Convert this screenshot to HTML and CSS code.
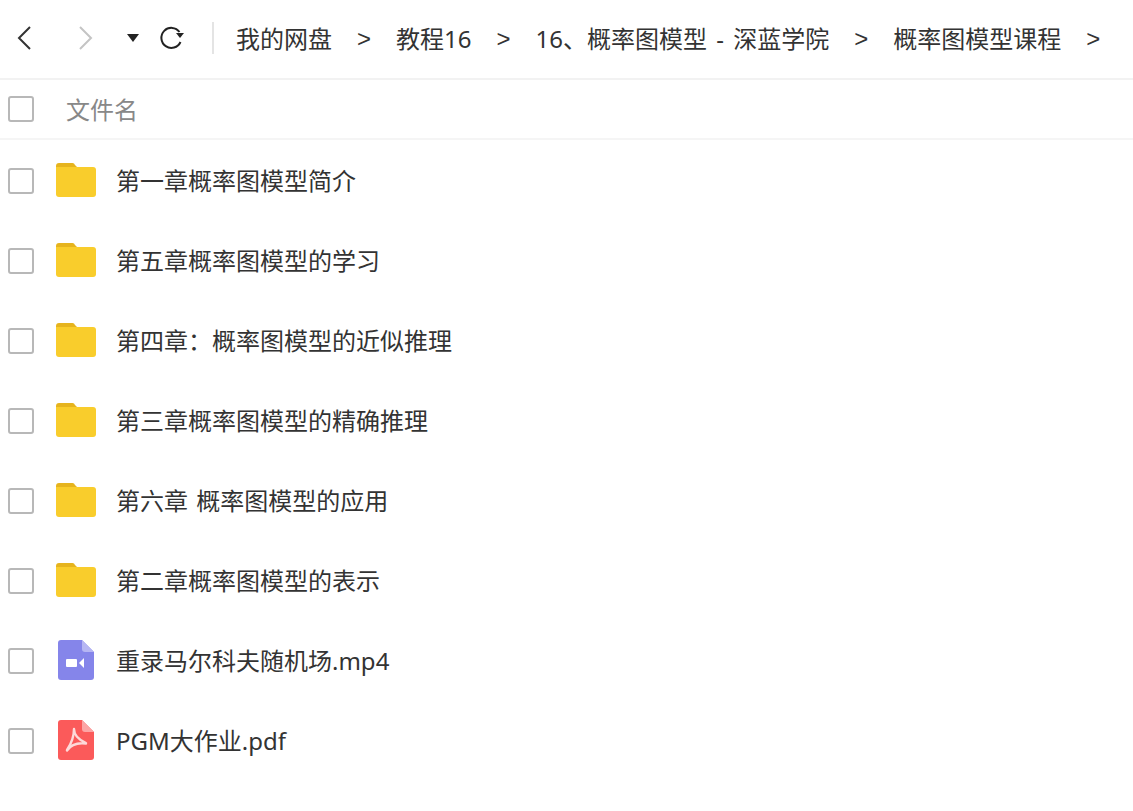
FILE: index.html
```html
<!DOCTYPE html>
<html lang="zh">
<head>
    <meta charset="UTF-8">
    <title>文件列表</title>
    <link rel="stylesheet" href="styles.css">
</head>
<body>
    <div class="toolbar">
        <svg class="nav-icon back" width="16" height="26" viewBox="0 0 16 26"><path d="M14 2 3 13l11 11" fill="none" stroke="#333" stroke-width="2"/></svg>
        <svg class="nav-icon forward" width="16" height="26" viewBox="0 0 16 26"><path d="M2 2l11 11L2 24" fill="none" stroke="#c4c4c4" stroke-width="2"/></svg>
        <svg class="nav-icon drop" width="12" height="8" viewBox="0 0 12 8"><path d="M0 0h12L6 8z" fill="#222"/></svg>
        <svg class="nav-icon reload" width="27" height="24" viewBox="0 0 27 24"><path d="M20.500 6A10 10 0 1 0 21.500 16" fill="none" stroke="#222" stroke-width="2"/><path d="M17 7h8l-4 5z" fill="#222"/></svg>
        <div class="divider"></div>
        <div class="crumbs">
            <span>我的网盘</span><span class="sep">&gt;</span>
            <span>教程16</span><span class="sep">&gt;</span>
            <span>16、概率图模型 - 深蓝学院</span><span class="sep">&gt;</span>
            <span>概率图模型课程</span><span class="sep">&gt;</span>
        </div>
    </div>

    <div class="list-head">
        <span class="check"></span>
        <span class="head-name">文件名</span>
    </div>

    <div class="row">
        <span class="check"></span>
        <svg class="file-icon" width="40" height="34" viewBox="0 0 40 34"><use href="#folder"/></svg>
        <span class="name">第一章概率图模型简介</span>
    </div>
    <div class="row">
        <span class="check"></span>
        <svg class="file-icon" width="40" height="34" viewBox="0 0 40 34"><use href="#folder"/></svg>
        <span class="name">第五章概率图模型的学习</span>
    </div>
    <div class="row">
        <span class="check"></span>
        <svg class="file-icon" width="40" height="34" viewBox="0 0 40 34"><use href="#folder"/></svg>
        <span class="name">第四章：概率图模型的近似推理</span>
    </div>
    <div class="row">
        <span class="check"></span>
        <svg class="file-icon" width="40" height="34" viewBox="0 0 40 34"><use href="#folder"/></svg>
        <span class="name">第三章概率图模型的精确推理</span>
    </div>
    <div class="row">
        <span class="check"></span>
        <svg class="file-icon" width="40" height="34" viewBox="0 0 40 34"><use href="#folder"/></svg>
        <span class="name">第六章 概率图模型的应用</span>
    </div>
    <div class="row">
        <span class="check"></span>
        <svg class="file-icon" width="40" height="34" viewBox="0 0 40 34"><use href="#folder"/></svg>
        <span class="name">第二章概率图模型的表示</span>
    </div>
    <div class="row">
        <span class="check"></span>
        <svg class="file-icon" width="40" height="40" viewBox="0 0 40 40">
            <path d="M5 0h21l12 12v25a3 3 0 0 1-3 3H5a3 3 0 0 1-3-3V3a3 3 0 0 1 3-3z" fill="#8585ea"/>
            <path d="M26 0l12 12h-9a3 3 0 0 1-3-3z" fill="#b6b6f3"/>
            <rect x="10" y="19" width="11" height="8" rx="1" fill="#fff"/>
            <path d="M23 23l5-5v10l-5-5z" fill="#fff"/>
        </svg>
        <span class="name">重录马尔科夫随机场.mp4</span>
    </div>
    <div class="row">
        <span class="check"></span>
        <svg class="file-icon" width="40" height="40" viewBox="0 0 40 40">
            <path d="M5 0h21l12 12v25a3 3 0 0 1-3 3H5a3 3 0 0 1-3-3V3a3 3 0 0 1 3-3z" fill="#fb5a5a"/>
            <path d="M26 0l12 12h-9a3 3 0 0 1-3-3z" fill="#fca5a5"/>
            <path d="M18 9c0 5 3 10 12 14M30 23.500c-8-1-15 1-19 7M18 9c0 7-3 15-7 21" fill="none" stroke="#fdd9d9" stroke-width="2.400" stroke-linecap="round"/>
        </svg>
        <span class="name">PGM大作业.pdf</span>
    </div>

    <svg class="defs" width="0" height="0">
        <symbol id="folder" viewBox="0 0 40 34">
            <path d="M0 4V3a3 3 0 0 1 3-3h13a3 3 0 0 1 3 2l2 2z" fill="#e6b41e"/>
            <path d="M0 4h37a3 3 0 0 1 3 3v24a3 3 0 0 1-3 3H3a3 3 0 0 1-3-3z" fill="#f9cd2c"/>
        </symbol>
    </svg>
</body>
</html>
```

FILE: styles.css
```css
* { box-sizing: border-box; }
body { margin: 0; background: #fff; color: #333; font-family: "Noto Sans", "Noto Sans CJK SC", sans-serif; font-size: 24px; overflow: hidden; }
.defs { display: block; }

.toolbar { display: flex; align-items: center; height: 80px; padding: 0 0 2px 16px; border-bottom: 2px solid #f2f2f2; }
.nav-icon { flex: none; }
.forward { margin-left: 46px; }
.drop { margin-left: 33px; }
.reload { margin-left: 20px; }
.divider { width: 2px; height: 32px; margin-left: 26px; background: #e4e4e4; }
.crumbs { display: flex; align-items: center; gap: 25px; margin-left: 22px; padding-bottom: 2px; white-space: nowrap; word-spacing: 3px; }
.sep { width: 14px; margin-top: 4px; font-family: "Liberation Sans", sans-serif; }

.list-head { display: flex; align-items: center; height: 60px; padding-left: 8px; border-bottom: 2px solid #f5f5f5; }
.head-name { margin-left: 32px; padding-bottom: 2px; color: #888; }

.check { flex: none; width: 26px; height: 26px; border: 2px solid #b8b8b8; border-radius: 3px; background: #fff; }

.row { display: flex; align-items: center; height: 80px; padding-left: 8px; }
.row .check { margin-top: 2px; }
.file-icon { flex: none; margin-left: 22px; }
.name { margin-left: 20px; padding-bottom: 2px; white-space: nowrap; word-spacing: 2px; }
```
